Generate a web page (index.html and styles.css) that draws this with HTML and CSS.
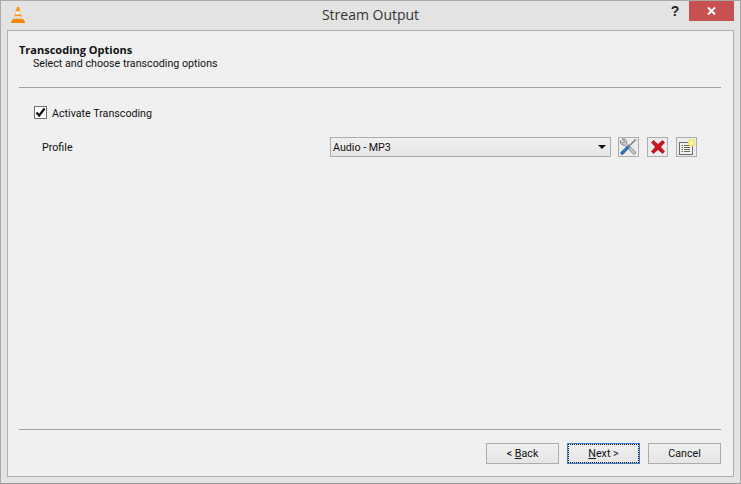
FILE: index.html
```html
<!DOCTYPE html>
<html lang="en">
<head>
<meta charset="utf-8">
<title>Stream Output</title>
<link rel="stylesheet" href="styles.css">
</head>
<body>
<div class="window">
  <header class="titlebar">
    <svg class="app-icon" width="14" height="18" viewBox="0 0 14 18">
      <path d="M0 15.5 L2 13 H12 L14 15.5 V17 H0Z" fill="#f08a10"/>
      <path d="M5.9 1 Q7 .5 8.1 1 L11.5 14 H2.5Z" fill="#f7941e"/>
      <path d="M5 5.2 H9 L9.8 8.5 H4.2Z" fill="#eee"/>
      <path d="M3.6 10.3 H10.4 L11 12.6 H3Z" fill="#e8e8e8"/>
    </svg>
    <div class="title">Stream Output</div>
    <div class="help">?</div>
    <div class="close">
      <svg width="9" height="8" viewBox="0 0 9 8"><path d="M1 .5 L8 7.5 M8 .5 L1 7.5" stroke="#fff" stroke-width="2"/></svg>
    </div>
  </header>
  <main class="client">
    <section class="head">
      <div class="head-title">Transcoding Options</div>
      <div class="head-sub">Select and choose transcoding options</div>
    </section>
    <hr class="rule">
    <section class="body">
      <label class="activate">
        <span class="checkbox">
          <svg width="11" height="11" viewBox="0 0 11 11"><path d="M1.5 5.5 L4.2 8.5 L9.6 1.5" fill="none" stroke="#111" stroke-width="2.2"/></svg>
        </span>
        <span class="activate-text">Activate Transcoding</span>
      </label>
      <div class="profile">
        <span class="profile-label">Profile</span>
        <div class="combo">
          <span>Audio - MP3</span>
          <span class="arrow"></span>
        </div>
        <button class="tool">
          <svg width="19" height="18" viewBox="0 0 19 18">
            <path d="M3 1 L5.6 3.6 L4 5.2 L1.4 2.6 C.8 5.8 3.2 7.6 5.6 7 L14.2 15.8 C15.4 17 17.4 15.2 16.2 13.8 L7.6 5.2 C8.2 2.6 6 .2 3 1Z" fill="#c4cacf" stroke="#6d7479" stroke-width=".8"/>
            <path d="M9 9 L16.2 2.2" stroke="#7c8388" stroke-width="1.6"/>
            <circle cx="16.4" cy="2.1" r="1.1" fill="#9aa1a6"/>
            <path d="M8.6 8 L10.2 9.6 L4.2 16.2 C3 17.4 1 15.6 2.2 14Z" fill="#2f72c4" stroke="#1c4f96" stroke-width=".7"/>
          </svg>
        </button>
        <button class="tool">
          <svg width="16" height="16" viewBox="0 0 16 16">
            <path d="M1.5 3.5 L3.5 1.5 L8 5.5 L12.5 1.5 L14.5 3.5 L10.5 8 L14.5 12.5 L12.5 14.5 L8 10.5 L3.5 14.5 L1.5 12.5 L5.5 8Z" fill="#d3121c" stroke="#8e1015" stroke-width=".7"/>
          </svg>
        </button>
        <button class="tool">
          <svg width="18" height="17" viewBox="0 0 18 17">
            <rect x="1.5" y="3.5" width="13" height="12" fill="#f3f3ea" stroke="#6a6a6a"/>
            <path d="M3.5 6.5 H5 M3.5 8.5 H5 M3.5 10.5 H5 M3.5 12.5 H5 M6 6.5 H12 M6 8.5 H12 M6 10.5 H12 M6 12.5 H12" stroke="#666" stroke-width="1"/>
            <circle cx="13.5" cy="3.8" r="3.6" fill="#f3e760"/>
            <circle cx="13.5" cy="3.8" r="2" fill="#fbf6b0"/>
          </svg>
        </button>
      </div>
    </section>
    <hr class="rule">
    <footer class="buttons">
      <button class="btn">&lt; <u>B</u>ack</button>
      <button class="btn default"><u>N</u>ext &gt;</button>
      <button class="btn">Cancel</button>
    </footer>
  </main>
</div>
</body>
</html>
```
FILE: styles.css
```css
* { box-sizing: border-box; }
html, body { margin: 0; height: 100%; }
body { font-family: "Roboto", "Open Sans", sans-serif; font-size: 10.7px; color: #111; }
.window {
  width: 741px; height: 484px; background: #e3e3e3;
  border: 1px solid #a9a9a9; border-bottom-color: #9c9c9c;
  display: flex; flex-direction: column;
}
.titlebar { height: 29px; flex: none; display: flex; align-items: flex-start; padding-left: 10px; }
.app-icon { margin-top: 5px; flex: none; }
.title { flex: 1; text-align: center; font-family: "Open Sans", sans-serif; font-size: 14px; line-height: 28px; color: #333; padding-left: 55px; }
.help { width: 28px; font: bold 14px/20px "Liberation Sans", sans-serif; color: #222; text-align: center; }
.close { width: 45px; height: 20px; background: #c75050; display: flex; align-items: center; justify-content: center; margin-right: 6px; }
.client {
  flex: 1; margin: 0 6px 6px; background: #f0f0f0; border: 1px solid #b0b0b0;
  display: flex; flex-direction: column; padding: 0 12px 0 11px;
}
.head { padding-top: 12px; height: 56px; }
.head-title { font-family: "Open Sans", sans-serif; font-size: 11px; font-weight: 700; line-height: 14px; }
.head-sub { line-height: 14px; padding-left: 14px; }
.rule { margin: 0; height: 1px; border: 0; background: #a0a0a0; flex: none; }
.body { flex: 1; padding: 16px 0 0 15px; }
.activate { display: flex; align-items: center; gap: 5px; height: 16px; }
.activate-text { padding-top: 3px; }
.checkbox { width: 13px; height: 13px; border: 1px solid #707070; background: #fff; display: flex; align-items: center; justify-content: center; }
.profile { display: flex; align-items: center; margin-top: 16px; padding-left: 8px; height: 22px; }
.profile-label { width: 288px; }
.combo {
  width: 281px; height: 20px; border: 1px solid #acacac; background: linear-gradient(#f0f0f0, #e5e5e5);
  display: flex; align-items: center; justify-content: space-between; padding: 0 3px 0 2px;
}
.arrow { width: 0; height: 0; border: 4px solid transparent; border-top-color: #111; border-bottom: 0; margin-right: 1px; }
.tool {
  width: 21px; height: 20px; margin-left: 7px; padding: 0; border: 1px solid #adadad; background: #ececec;
  display: flex; align-items: center; justify-content: center;
}
.tool + .tool { margin-left: 8px; }
.buttons { flex: none; height: 46px; display: flex; justify-content: flex-end; gap: 8px; padding-top: 13px; }
.btn {
  width: 73px; height: 21px; padding: 0; border: 1px solid #acacac; background: linear-gradient(#f0f0f0, #e5e5e5);
  font: inherit; color: #111;
}
.btn.default { border-color: #3c7fc8; outline: 1px dotted #111; outline-offset: -2px; }
```
